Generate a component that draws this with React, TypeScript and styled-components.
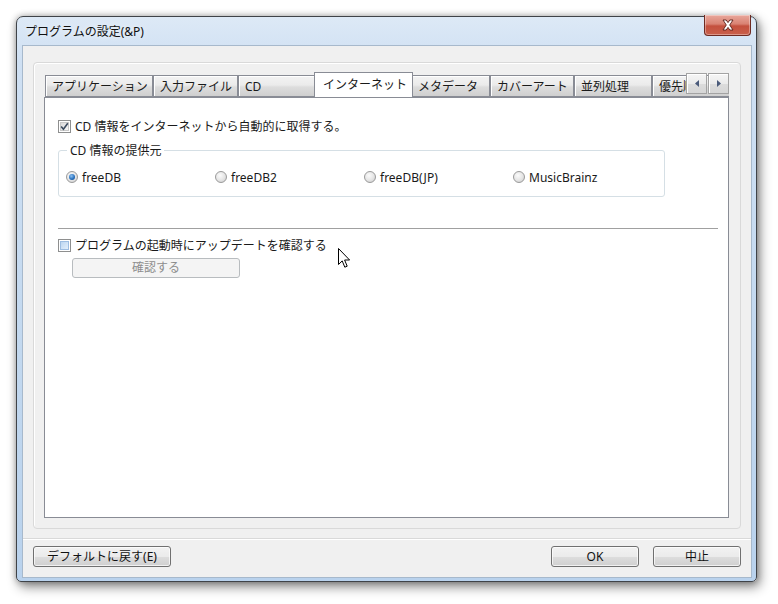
import React from "react";
import styled, { createGlobalStyle } from "styled-components";

const GlobalStyle = createGlobalStyle`
  html, body {
    margin: 0;
    padding: 0;
    background: #ffffff;
  }
  body {
    font-family: "Noto Sans", "Noto Sans CJK JP", sans-serif;
    font-size: 12px;
    color: #1a1a1a;
  }
`;

const Desktop = styled.div`
  width: 778px;
  height: 604px;
  padding: 16px 0 0 16px;
  box-sizing: border-box;
  overflow: hidden;
`;

const Window = styled.div`
  width: 741px;
  height: 566px;
  box-sizing: border-box;
  border: 1px solid #3f4348;
  border-radius: 7px 7px 5px 5px;
  background: linear-gradient(180deg, #dde9f6 0%, #cfe0f3 8%, #c2d8ef 60%, #b9d2ed 100%);
  box-shadow: 3px 5px 12px rgba(0, 0, 0, 0.45), 0 0 6px rgba(0, 0, 0, 0.3);
  display: flex;
  flex-direction: column;
  padding: 0 5px 3px 6px;
`;

const TitleBar = styled.div`
  height: 28px;
  display: flex;
  align-items: center;
  justify-content: space-between;
  padding-left: 2px;
`;

const Title = styled.span`
  font-size: 12px;
  color: #111;
  text-shadow: 0 0 6px rgba(255, 255, 255, 0.9);
`;

const CloseButton = styled.div`
  align-self: flex-start;
  margin-top: -2px;
  width: 47px;
  height: 21px;
  box-sizing: border-box;
  border: 1px solid #6e2a22;
  border-top: none;
  border-radius: 0 0 4px 4px;
  background: linear-gradient(180deg, #e9a89c 0%, #d98273 45%, #c4503e 55%, #c9604b 100%);
  box-shadow: inset 0 0 0 1px rgba(255, 255, 255, 0.35);
  display: flex;
  align-items: center;
  justify-content: center;
`;

const Client = styled.div`
  flex: 1;
  background: #f0f0f0;
  border: 1px solid #a7b9cc;
  margin: 0 -1px;
  display: flex;
  flex-direction: column;
  padding: 16px 10px 0 10px;
`;

const Panel = styled.div`
  flex: 1;
  border: 1px solid #d9d9d9;
  border-radius: 4px;
  box-shadow: inset 1px 1px 0 #ffffff;
  padding: 9px 11px 10px 10px;
  display: flex;
  flex-direction: column;
`;

const TabStrip = styled.div`
  position: relative;
  height: 25px;
  display: flex;
  align-items: flex-end;
  padding-left: 1px;
  overflow: hidden;
`;

const Tab = styled.div<{ $w: number; $active?: boolean }>`
  flex: none;
  width: ${(p) => p.$w}px;
  height: ${(p) => (p.$active ? 26 : 22)}px;
  box-sizing: border-box;
  border: 1px solid #898c95;
  border-bottom: ${(p) => (p.$active ? "none" : "1px solid #898c95")};
  margin: ${(p) => (p.$active ? "0 -2px -1px -2px" : "0")};
  position: relative;
  z-index: ${(p) => (p.$active ? 2 : 1)};
  background: ${(p) =>
    p.$active
      ? "#ffffff"
      : "linear-gradient(180deg, #f3f3f3 0%, #ebebeb 45%, #dddddd 55%, #cfcfcf 100%)"};
  box-shadow: ${(p) => (p.$active ? "none" : "inset 1px 1px 0 #ffffff")};
  padding: ${(p) => (p.$active ? "4px 0 0 8px" : "3px 0 0 6px")};
  white-space: nowrap;
  overflow: hidden;
  font-size: 12px;
  line-height: 16px;
`;

const ScrollButtons = styled.div`
  position: absolute;
  right: 0;
  top: 1px;
  display: flex;
  gap: 1px;
  z-index: 3;
`;

const ScrollButton = styled.div`
  width: 21px;
  height: 21px;
  box-sizing: border-box;
  border: 1px solid #a3a3a3;
  background: linear-gradient(180deg, #f5f5f5 0%, #ebebeb 50%, #dcdcdc 51%, #d6d6d6 100%);
  box-shadow: inset 1px 1px 0 #ffffff;
  display: flex;
  align-items: center;
  justify-content: center;
`;

const Pane = styled.div`
  flex: 1;
  position: relative;
  background: #ffffff;
  border: 1px solid #898c95;
  padding: 20px 10px 0 13px;
  display: flex;
  flex-direction: column;
  align-items: flex-start;
`;

const CheckRow = styled.label`
  display: flex;
  align-items: center;
  gap: 4px;
  height: 16px;
  white-space: nowrap;
`;

const Box = styled.span<{ $hot?: boolean }>`
  width: 13px;
  height: 13px;
  box-sizing: border-box;
  border: 1px solid #8e8f8f;
  background: #f4f4f4;
  display: flex;
  align-items: center;
  justify-content: center;
  box-shadow: inset 0 0 0 1px #ffffff;
  &::after {
    content: "";
    width: 9px;
    height: 9px;
    box-sizing: border-box;
    border: 1px solid ${(p) => (p.$hot ? "#9dbde2" : "#c8c8c8")};
    background: ${(p) =>
      p.$hot
        ? "linear-gradient(135deg, #bcd6f1 0%, #e3effb 100%)"
        : "linear-gradient(135deg, #dadada 0%, #f6f6f6 100%)"};
  }
`;

const Check = styled.svg`
  position: absolute;
`;

const BoxWrap = styled.span`
  position: relative;
  display: flex;
  align-items: center;
  justify-content: center;
`;

const Group = styled.fieldset`
  margin: 8px 0 0 0;
  width: 607px;
  box-sizing: border-box;
  border: 1px solid #d5dfe5;
  border-radius: 3px;
  padding: 10px 0 11px 7px;
`;

const Legend = styled.legend`
  margin-left: 1px;
  padding: 0 3px;
  line-height: 17px;
  font-size: 12px;
`;

const RadioRow = styled.div`
  display: flex;
  height: 16px;
`;

const RadioItem = styled.label`
  width: 149px;
  display: flex;
  align-items: center;
  gap: 4px;
  white-space: nowrap;
`;

const RadioDot = styled.span<{ $on?: boolean }>`
  width: 12px;
  height: 12px;
  box-sizing: border-box;
  border-radius: 50%;
  border: 1px solid #9a9a9a;
  background: radial-gradient(circle at 40% 35%, #fbfbfb 0%, #e4e4e4 55%, #c9c9c9 100%);
  display: flex;
  align-items: center;
  justify-content: center;
  &::after {
    content: "";
    display: ${(p) => (p.$on ? "block" : "none")};
    width: 6px;
    height: 6px;
    border-radius: 50%;
    background: radial-gradient(circle at 40% 35%, #8fc2f0 0%, #2a73c0 55%, #0e3d7a 100%);
  }
`;

const Divider = styled.div`
  align-self: stretch;
  height: 1px;
  background: #a0a0a0;
  margin-top: 31px;
  margin-bottom: 8px;
`;

const PushButton = styled.button<{ $w: number; $h?: number; $disabled?: boolean }>`
  width: ${(p) => p.$w}px;
  height: ${(p) => p.$h ?? 21}px;
  box-sizing: border-box;
  border: 1px solid ${(p) => (p.$disabled ? "#b8bcbf" : "#707070")};
  border-radius: 3px;
  background: ${(p) =>
    p.$disabled
      ? "#f4f4f4"
      : "linear-gradient(180deg, #f2f2f2 0%, #ebebeb 50%, #dddddd 51%, #cfcfcf 100%)"};
  box-shadow: ${(p) => (p.$disabled ? "none" : "inset 0 0 0 1px rgba(255,255,255,0.7)")};
  color: ${(p) => (p.$disabled ? "#8d8d8d" : "#111")};
  font-family: "Noto Sans", "Noto Sans CJK JP", sans-serif;
  font-size: 12px;
  line-height: 16px;
  padding: 0;
  cursor: default;
`;

const SubButton = styled(PushButton)`
  margin: 5px 0 0 14px;
`;

const Footer = styled.div`
  margin: 9px -10px 0 -10px;
  border-top: 1px solid #d9d9d9;
  box-shadow: inset 0 1px 0 #ffffff;
  padding: 7px 10px 10px 10px;
  display: flex;
  align-items: center;
`;

const Spacer = styled.div`
  flex: 1;
`;

const ButtonGap = styled.div`
  width: 14px;
`;

const Cursor = styled.svg`
  position: absolute;
  left: 293px;
  top: 150px;
`;

const tabs = [
  { label: "アプリケーション", w: 108 },
  { label: "入力ファイル", w: 85 },
  { label: "CD", w: 78 },
  { label: "インターネット", w: 99, active: true },
  { label: "メタデータ", w: 79 },
  { label: "カバーアート", w: 84 },
  { label: "並列処理", w: 78 },
  { label: "優先順位", w: 80 },
];

const providers = ["freeDB", "freeDB2", "freeDB(JP)", "MusicBrainz"];

function CheckBox({ checked, hot }: { checked?: boolean; hot?: boolean }) {
  return (
    <BoxWrap>
      <Box $hot={hot} />
      {checked && (
        <Check width="9" height="9" viewBox="0 0 9 9">
          <path d="M1.2 4.6 L3.4 7.2 L7.8 1.2" fill="none" stroke="#3a4a5e" strokeWidth="1.6" />
        </Check>
      )}
    </BoxWrap>
  );
}

export default function App() {
  return (
    <>
      <GlobalStyle />
      <Desktop>
        <Window>
          <TitleBar>
            <Title>プログラムの設定(&amp;P)</Title>
            <CloseButton>
              <svg width="14" height="12" viewBox="0 0 14 12">
                <path
                  d="M2 1 L5.2 1 L7 3.6 L8.8 1 L12 1 L8.7 6 L12 11 L8.8 11 L7 8.4 L5.2 11 L2 11 L5.3 6 Z"
                  fill="#ffffff"
                  stroke="#5a1f18"
                  strokeWidth="0.9"
                  strokeLinejoin="round"
                />
              </svg>
            </CloseButton>
          </TitleBar>
          <Client>
            <Panel>
              <TabStrip>
                {tabs.map((t) => (
                  <Tab key={t.label} $w={t.w} $active={t.active}>
                    {t.label}
                  </Tab>
                ))}
                <ScrollButtons>
                  <ScrollButton>
                    <svg width="4" height="7" viewBox="0 0 4 7">
                      <path d="M4 0 L0 3.5 L4 7 Z" fill="#4a5a7a" />
                    </svg>
                  </ScrollButton>
                  <ScrollButton>
                    <svg width="4" height="7" viewBox="0 0 4 7">
                      <path d="M0 0 L4 3.5 L0 7 Z" fill="#4a5a7a" />
                    </svg>
                  </ScrollButton>
                </ScrollButtons>
              </TabStrip>
              <Pane>
                <CheckRow>
                  <CheckBox checked />
                  CD 情報をインターネットから自動的に取得する。
                </CheckRow>
                <Group>
                  <Legend>CD 情報の提供元</Legend>
                  <RadioRow>
                    {providers.map((p, i) => (
                      <RadioItem key={p}>
                        <RadioDot $on={i === 0} />
                        {p}
                      </RadioItem>
                    ))}
                  </RadioRow>
                </Group>
                <Divider />
                <CheckRow>
                  <CheckBox hot />
                  プログラムの起動時にアップデートを確認する
                </CheckRow>
                <SubButton $w={168} $h={20} $disabled>
                  確認する
                </SubButton>
                <Cursor width="13" height="21" viewBox="0 0 13 21">
                  <path
                    d="M0.5 0.5 L0.5 16.5 L4.2 12.9 L6.8 19.2 L9.2 18.2 L6.6 12 L11.6 12 Z"
                    fill="#ffffff"
                    stroke="#000000"
                    strokeWidth="1"
                    strokeLinejoin="miter"
                  />
                </Cursor>
              </Pane>
            </Panel>
            <Footer>
              <PushButton $w={138}>デフォルトに戻す(E)</PushButton>
              <Spacer />
              <PushButton $w={88}>OK</PushButton>
              <ButtonGap />
              <PushButton $w={88}>中止</PushButton>
            </Footer>
          </Client>
        </Window>
      </Desktop>
    </>
  );
}
